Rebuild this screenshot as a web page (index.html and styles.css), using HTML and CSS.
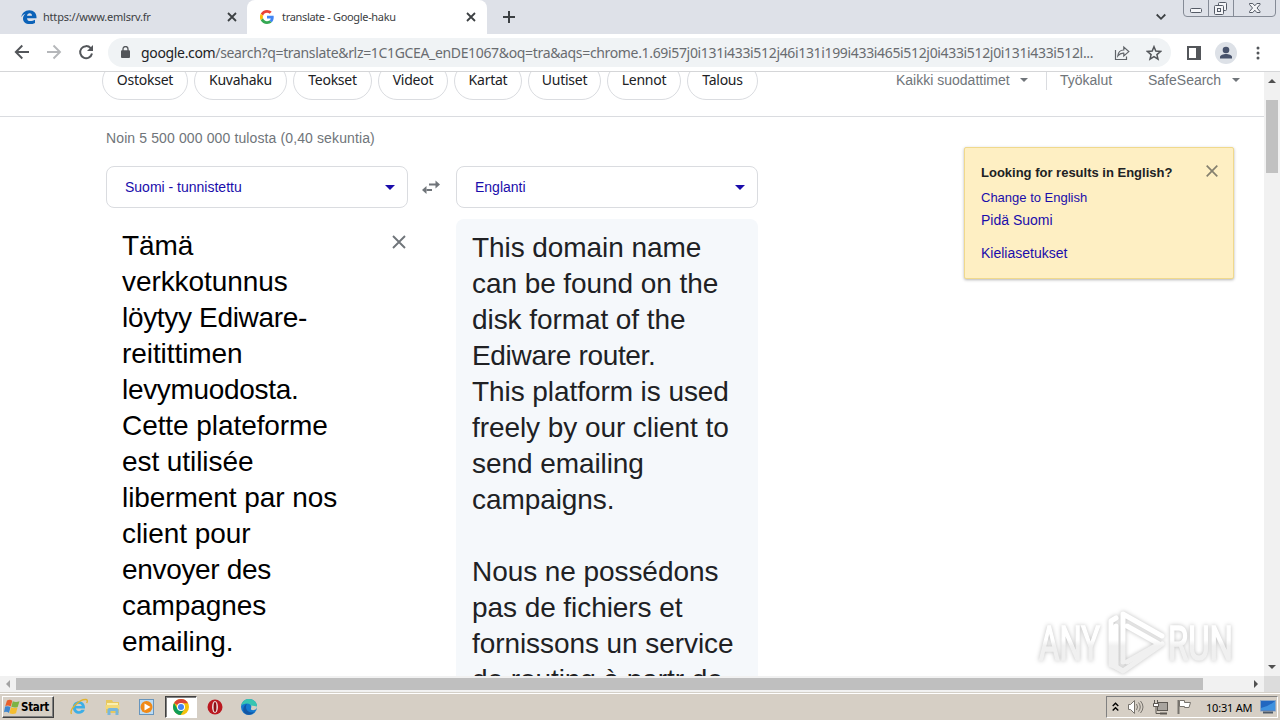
FILE: index.html
```html
<!DOCTYPE html>
<html lang="fi">
<head>
  <meta charset="UTF-8" />
  <title>translate - Google-haku</title>
  <link rel="stylesheet" href="styles.css">
</head>
<body>
  <div class="tab-strip">
    <div class="tab">
      <svg class="favicon" width="16" height="16" viewBox="0 0 16 16"><path d="M15.5 9.300H6c.2 2 1.400 2.800 3.200 2.800 1.800 0 3.400-.5 4.800-1.300v3.100c-1.500.8-3.300 1.200-5.500 1.200C4.500 15.100 2 12.800 2 9.500c0-1.800.8-3.500 2.500-4.700C2.700 5.300 1.200 6.700.3 8.300.8 4.200 4 1.200 8.300 1.200c4.500 0 7.200 3 7.200 7zM6 6.700h5c0-1.500-.8-2.500-2.300-2.500S6.200 5.200 6 6.700z" fill="#0b62b8"/></svg>
      <span class="tab-title first-title">https://www.emlsrv.fr</span>
      <svg class="tab-close" width="10" height="10" viewBox="0 0 10 10"><path d="M1 1l8 8M9 1l-8 8" stroke="#3c4043" stroke-width="1.8"/></svg>
    </div>
    <div class="tab active">
      <svg class="favicon" width="14" height="14" viewBox="0 0 48 48"><path fill="#ea4335" d="M24 9.500c3.500 0 6.700 1.200 9.200 3.600l6.900-6.900C35.900 2.400 30.500 0 24 0 14.600 0 6.500 5.400 2.600 13.200l8 6.200C12.400 13.700 17.700 9.500 24 9.500z"/><path fill="#4285f4" d="M47 24.500c0-1.600-.2-3.100-.4-4.500H24v9h12.900c-.6 3-2.300 5.500-4.800 7.200l7.700 6C44.400 38 47 31.800 47 24.500z"/><path fill="#fbbc05" d="M10.500 28.600a14.500 14.500 0 0 1 0-9.200l-8-6.200a24 24 0 0 0 0 21.600z"/><path fill="#34a853" d="M24 48c6.500 0 11.900-2.100 15.900-5.800l-7.700-6c-2.200 1.500-4.900 2.300-8.200 2.300-6.300 0-11.600-4.200-13.500-9.900l-8 6.200C6.500 42.600 14.600 48 24 48z"/></svg>
      <span class="tab-title second-title">translate - Google-haku</span>
      <svg class="tab-close" width="10" height="10" viewBox="0 0 10 10"><path d="M1 1l8 8M9 1l-8 8" stroke="#3c4043" stroke-width="1.8"/></svg>
    </div>
    <svg class="new-tab" width="12" height="12" viewBox="0 0 12 12"><path d="M6 0v12M0 6h12" stroke="#3c4043" stroke-width="2"/></svg>
    <svg class="tab-search" width="10" height="8" viewBox="0 0 10 8"><path d="M.7 1.500L5 5.800l4.300-4.300" fill="none" stroke="#3c4043" stroke-width="1.8"/></svg>
    <svg class="window-buttons" width="94" height="18" viewBox="0 0 94 18">
      <path d="M.5 0v13q0 3.500 3.500 3.500h85q3.500 0 3.500-3.500V0M25.500 0v16M50.500 0v16" fill="none" stroke="#858b96"/>
      <g fill="#f4f5f8" stroke="#555b66">
        <rect x="7.500" y="8.500" width="11" height="4" rx="1"/>
        <rect x="35.500" y="2.500" width="8" height="8" rx="1"/>
        <rect x="31.500" y="5.500" width="9" height="9" rx="1"/>
        <rect x="34.500" y="8.500" width="3" height="3"/>
        <path d="M66.500 3.500h3.300l2 2.300 2-2.300h3.200v1L74 8l3 3.500v1h-3.200l-2-2.300-2 2.300h-3.300v-1L69.500 8l-3-3.500z"/>
      </g>
    </svg>
  </div>

  <div class="toolbar">
    <svg class="nav-icons" width="82" height="16" viewBox="0 0 82 16">
      <path d="M15 8H2M8.300 1.500L1.800 8l6.500 6.500" fill="none" stroke="#53565a" stroke-width="1.900"/>
      <path d="M33 8h12.500M39.500 1.500L46 8l-6.500 6.500" fill="none" stroke="#b5b7ba" stroke-width="1.900"/>
      <path d="M76.700 4.200A6 6 0 1 0 78 9.500" fill="none" stroke="#53565a" stroke-width="2"/><path d="M79 1v6h-6z" fill="#53565a"/>
    </svg>
    <div class="omnibox">
      <svg class="lock" width="9" height="12" viewBox="0 0 9 12"><path d="M2 5V3a2.500 2.500 0 0 1 5 0v2" fill="none" stroke="#53565a" stroke-width="1.300"/><rect y="4.300" width="9" height="7.700" rx="1" fill="#53565a"/></svg>
      <div class="url"><span class="host">google.com</span>/search?q=translate&amp;rlz=1C1GCEA_enDE1067&amp;oq=tra&amp;aqs=chrome.1.69i57j0i131i433i512j46i131i199i433i465i512j0i433i512j0i131i433i512l...</div>
      <svg class="share" width="16" height="16" viewBox="0 0 16 16"><path d="M1.500 5v9.500h11v-3M3.800 11c.4-4 2.700-6 6-6V2l5 4.600-5 4.400V8.200C7.500 8 5.500 8.800 3.800 11z" fill="none" stroke="#5f6368" stroke-width="1.200"/></svg>
      <svg class="star" width="16" height="16" viewBox="0 0 16 16"><path d="M8 1.700l1.800 4.400 4.700.4-3.600 3.100 1.100 4.600L8 11.700l-4 2.500 1.100-4.600-3.600-3.100 4.700-.4z" fill="none" stroke="#53565a" stroke-width="1.500"/></svg>
    </div>
    <svg class="side-panel" width="14" height="14" viewBox="0 0 14 14"><rect x="1" y="1" width="12" height="12" fill="none" stroke="#53565a" stroke-width="2"/><path d="M9 0h5v14H9z" fill="#53565a"/></svg>
    <svg class="profile" width="22" height="22" viewBox="0 0 22 22"><circle cx="11" cy="11" r="11" fill="#dde1e7"/><circle cx="11" cy="8" r="3.300" fill="#47526b"/><path d="M5 16.500v-1.500c0-2 3.500-3 6-3s6 1 6 3v1.500z" fill="#47526b"/></svg>
    <svg class="menu-dots" width="4" height="14" viewBox="0 0 4 14" fill="#53565a"><circle cx="2" cy="2" r="1.500"/><circle cx="2" cy="7" r="1.500"/><circle cx="2" cy="12" r="1.500"/></svg>
  </div>

  <div class="window">
    <div class="page">
      <div class="filters">
        <div class="chip w86">Ostokset</div>
        <div class="chip w93">Kuvahaku</div>
        <div class="chip w79">Teokset</div>
        <div class="chip w70">Videot</div>
        <div class="chip w68">Kartat</div>
        <div class="chip w73">Uutiset</div>
        <div class="chip w74">Lennot</div>
        <div class="chip w71">Talous</div>
        <div class="tools">
          <span class="all-filters">Kaikki suodattimet</span><i class="caret"></i>
          <i class="divider"></i>
          <span class="tool-link">Työkalut</span>
          <span class="safe">SafeSearch</span><i class="caret"></i>
        </div>
      </div>

      <div class="results">
        <div class="stats">Noin 5 500 000 000 tulosta (0,40 sekuntia)</div>
        <div class="languages">
          <div class="select"><span>Suomi - tunnistettu</span><i class="caret blue"></i></div>
          <svg class="swap" width="18" height="14" viewBox="0 0 18 14"><path d="M4.500 10H10M7 4.500h7" stroke="#70757a" stroke-width="2"/><path d="M0 10l4.500-4v8zM18 4.500L13.500.5v8z" fill="#70757a"/></svg>
          <div class="select"><span>Englanti</span><i class="caret blue"></i></div>
        </div>
        <div class="panels">
          <div class="source">
            <div>Tämä<br>verkkotunnus<br><span class="tight">löytyy Ediware-</span><br>reitittimen<br><span class="tight">levymuodosta.</span><br>Cette plateforme<br>est utilisée<br>liberment par nos<br>client pour<br><span class="tight">envoyer des</span><br>campagnes<br>emailing.</div>
            <svg class="clear" width="14" height="14" viewBox="0 0 14 14"><path d="M1 1l12 12M13 1L1 13" stroke="#70757a" stroke-width="1.900"/></svg>
          </div>
          <div class="target">This domain name<br>can be found on the<br>disk format of the<br><span class="tight">Ediware router.</span><br>This platform is used<br>freely by our client to<br>send emailing<br>campaigns.<br><br>Nous ne possédons<br>pas de fichiers et<br>fornissons un service<br>de routing à partr de</div>
        </div>
      </div>

      <div class="notice">
        <div class="notice-head">
          <b>Looking for results in English?</b>
          <svg width="12" height="12" viewBox="0 0 12 12"><path d="M.7.7l10.600 10.600M11.300.7L.7 11.300" stroke="#85806f" stroke-width="1.700"/></svg>
        </div>
        <a class="change">Change to English</a>
        <a class="keep">Pidä Suomi</a>
        <a class="settings">Kieliasetukset</a>
      </div>

      <svg class="watermark" width="204" height="72" viewBox="0 0 204 72">
        <defs>
          <linearGradient id="fade" gradientUnits="userSpaceOnUse" x1="0" y1="0" x2="0" y2="72">
            <stop offset="0.5" stop-color="#fff"/>
            <stop offset="0.58" stop-color="#f0f0f0"/>
          </linearGradient>
        </defs>
        <g class="mark-text">
          <text x="3" y="56" textLength="61" lengthAdjust="spacingAndGlyphs">ANY</text>
          <text x="132" y="56" textLength="65" lengthAdjust="spacingAndGlyphs">RUN</text>
        </g>
        <g class="mark-logo">
          <path d="M87 58V10l39 22"/>
          <path d="M91 22l32 18-32 18"/>
          <path d="M80 14l-5 3v44l5 2V22"/>
          <path d="M80 63l7 4 39-27"/>
        </g>
      </svg>
    </div>
    <div class="scroll-y">
      <i class="arrow up"></i>
      <i class="thumb"></i>
      <i class="arrow down"></i>
    </div>
  </div>
  <div class="scroll-x">
    <i class="arrow left"></i>
    <i class="thumb"></i>
    <i class="arrow right"></i>
    <i class="corner"></i>
  </div>

  <div class="taskbar">
    <div class="start">
      <svg width="16" height="16" viewBox="0 0 16 16"><path d="M3 1.500q3-1.500 5.300.2L6.800 7.600Q4.500 6 1.300 7z" fill="#e8602c"/><path d="M8.800 2.200q3 1.500 6.700 0L13.700 8q-3 1.300-6.400-.2z" fill="#7db343"/><path d="M1.100 7.600q3-1 5.400.3L5 14Q2.500 12 0 13.200z" fill="#3f87cf"/><path d="M7 8.300q3 1.500 6.500.2L12 14.300q-3 1.300-6.600 0z" fill="#f4bd2f"/></svg>
      <b>Start</b>
    </div>
    <div class="launchers">
      <svg width="18" height="18" viewBox="0 0 18 18"><path d="M15 10.500H6c.3 3 4.300 3.500 5.400 1.300h3.400c-1.800 6-12 5.200-12-2.300C2.800 1.300 15.500 1 15 10.500z" fill="#3caee6"/><path d="M6 8h5.800c-.6-3-5.200-3-5.800 0z" fill="#d6cfc5"/><path d="M1.500 16C-1 12 9 1 16 1.500c1.800.2 1.500 2 .6 3.500" fill="none" stroke="#e2b32c" stroke-width="1.300"/></svg>
      <svg width="18" height="18" viewBox="0 0 18 18"><path d="M2 2h6l1 2h6v11H2z" fill="#e8c85e"/><path d="M3 5h11v5H3z" fill="#faf0b0"/><path d="M1.500 7h14v4h-14z" fill="#f3d978"/><path d="M3.500 17v-5q0-2 2-2h7q2 0 2 2v5h-3v-4h-5v4z" fill="#78b7dc"/></svg>
      <svg width="18" height="18" viewBox="0 0 18 18"><rect x="1.500" y="1.500" width="14" height="15" fill="#bcdcf5" stroke="#6795bd"/><circle cx="8.500" cy="9" r="6" fill="#f08a18"/><path d="M6.500 5.500v7l6-3.500z" fill="#fff"/></svg>
      <div class="running">
        <svg width="16" height="16" viewBox="0 0 16 16"><circle cx="8" cy="8" r="8" fill="#f4c20d"/><path d="M8 8L1.100 4A8 8 0 0 1 15 4.300H8z" fill="#db4437"/><path d="M1.100 4A8 8 0 0 0 7.500 16L11.500 10 8 8 4.500 10z" fill="#0f9d58"/><circle cx="8" cy="8" r="4" fill="#fff"/><circle cx="8" cy="8" r="3" fill="#4285f4"/></svg>
      </div>
      <svg width="18" height="18" viewBox="0 0 18 18"><circle cx="9" cy="9" r="7.500" fill="#bb1820"/><ellipse cx="9" cy="9" rx="3" ry="6" fill="#ead9d7"/><ellipse cx="9" cy="9" rx="1.400" ry="5" fill="#8e1016"/></svg>
      <svg width="18" height="18" viewBox="0 0 18 18"><circle cx="9" cy="9" r="8" fill="#1479cf"/><path d="M1.200 8C2 3.500 5 1 9 1c5 0 8 3.500 8 7 0 3.500-3.500 4.500-6 3 1.500-3-1-5.500-4-5.500-2.500 0-5 1-5.800 2.500z" fill="#37c5b1"/><path d="M7 6c-3 4 1 10 7 8-2 3-6 3.500-9 1.500C2 13.500 3 7 7 6z" fill="#1256a4"/><path d="M11 7.500c1.200 1.500-.5 2.500 0 4 2 1.500 6 .5 6-3z" fill="#d6cfc5"/></svg>
    </div>
    <div class="tray">
      <svg class="chevrons" width="7" height="10" viewBox="0 0 7 10"><path d="M.7 4l2.800-2.800L6.300 4M.7 8.500l2.800-2.800 2.800 2.800" fill="none" stroke="#000" stroke-width="1.400"/></svg>
      <svg width="17" height="16" viewBox="0 0 17 16" fill="none" stroke="#77736d"><path d="M1.500 5.500h2l4-4v13l-4-4h-2z" fill="#fff"/><path d="M9.500 5q2 3 0 6M11.500 3.500q3.500 4.500 0 9M13.500 2q5 6 0 12"/></svg>
      <svg width="17" height="16" viewBox="0 0 17 16"><rect x="5.500" y="3.500" width="10" height="8" fill="#a8a49e" stroke="#5c5852"/><path d="M2.500 1v3M5.500 1v3M1.500 4.500h5v3h-5zM4 8v6.500h11" fill="none" stroke="#5c5852"/><rect x="2" y="5" width="4" height="2" fill="#fff"/><path d="M8 14.500h7" stroke="#5c5852" stroke-width="2"/></svg>
      <svg class="flag" width="17" height="16" viewBox="0 0 17 16"><path d="M2.500 1v14" stroke="#77736d" stroke-width="2"/><path d="M3.500 1.500h5v2h6l-1.500 5H8.500v-1h-5z" fill="#fff" stroke="#77736d"/></svg>
      <span class="clock">10:31 AM</span>
      <svg class="desktop" width="16" height="14" viewBox="0 0 16 14"><rect x=".5" y=".5" width="15" height="10.500" fill="#2167c0" stroke="#8da7c5"/><path d="M1 8Q8 7 15 1v9H1z" fill="#3f92df"/><path d="M3 12.500h10" stroke="#4e5a68" stroke-width="2"/></svg>
    </div>
  </div>
</body>
</html>
```

FILE: styles.css
```css
* {
  box-sizing: border-box;
}

body {
  display: flex;
  flex-direction: column;
  width: 1280px;
  height: 720px;
  margin: 0;
  overflow: hidden;
  background: #fff;
  font-family: "Liberation Sans", Arial, sans-serif;
  font-size: 14px;
}

svg {
  display: block;
  flex: none;
}

i {
  display: block;
  flex: none;
}

/* browser tabs */
.tab-strip {
  display: flex;
  align-items: center;
  flex: none;
  height: 34px;
  background: #dee1e8;
}

.tab {
  display: flex;
  align-items: center;
  width: 247px;
  height: 34px;
  padding: 0 10px 0 21px;
}

.tab.active {
  width: 240px;
  padding: 0 11px 0 13px;
  background: #fff;
  border-radius: 8px 8px 0 0;
}

.tab-title {
  flex: 1;
  margin: -2px 0 0 8px;
  font-family: "Noto Sans", sans-serif;
  font-size: 11px;
  color: #3c4043;
  white-space: nowrap;
}

.first-title {
  margin-left: 6px;
  letter-spacing: -0.2px;
}

.second-title {
  letter-spacing: -0.33px;
}

.new-tab {
  margin-left: 16px;
}

.tab-search {
  margin-left: 641px;
}

.window-buttons {
  align-self: flex-start;
  margin-left: 17px;
}

/* toolbar */
.toolbar {
  display: flex;
  align-items: center;
  flex: none;
  height: 38px;
  padding-left: 14px;
  border-bottom: 1px solid #d5d6d8;
}

.nav-icons {
  margin-top: -2px;
}

.omnibox {
  display: flex;
  align-items: center;
  width: 1063px;
  height: 29px;
  margin-left: 12px;
  padding-left: 13px;
  border-radius: 15px;
  background: #f0f3f5;
}

.lock {
  margin-top: -2px;
}

.url {
  width: 960px;
  margin-left: 11px;
  font-family: "Noto Sans", sans-serif;
  color: #696c70;
  letter-spacing: -0.34px;
  white-space: nowrap;
}

.host {
  color: #202124;
}

.share {
  margin-left: 13px;
}

.star {
  margin-left: 16px;
}

.side-panel {
  margin-left: 16px;
}

.profile {
  margin-left: 14px;
}

.menu-dots {
  margin-left: 19px;
}

/* visible part of the page */
.window {
  display: flex;
  flex: none;
  height: 604px;
}

.page {
  position: relative;
  width: 1264px;
  overflow: hidden;
}

.filters {
  display: flex;
  gap: 6px;
  height: 55px;
  margin-top: -10px;
  padding-left: 102px;
  border-bottom: 1px solid #dadce0;
}

.chip {
  flex: none;
  height: 38px;
  border: 1px solid #dadce0;
  border-radius: 19px;
  font-family: "Noto Sans", sans-serif;
  color: #202124;
  letter-spacing: -0.25px;
  line-height: 33px;
  text-align: center;
}

.w86 { width: 86px; }
.w93 { width: 93px; }
.w79 { width: 79px; }
.w70 { width: 70px; }
.w68 { width: 68px; }
.w73 { width: 73px; }
.w74 { width: 74px; }
.w71 { width: 71px; }

.tools {
  display: flex;
  align-items: center;
  height: 36px;
  margin-left: 132px;
  color: #70757a;
}

.all-filters {
  width: 124px;
}

.caret {
  width: 0;
  height: 0;
  border: 4px solid transparent;
  border-top: 4px solid #70757a;
  border-bottom: 0;
}

.caret.blue {
  border-width: 5px 5px 0;
  border-top-color: #1a0dab;
}

.divider {
  width: 1px;
  height: 20px;
  margin: 0 13px 0 18px;
  background: #dadce0;
}

.tool-link {
  width: 88px;
}

.safe {
  width: 84px;
}

.results {
  padding-left: 106px;
}

.stats {
  height: 49px;
  padding-top: 13px;
  color: #70757a;
  line-height: 17px;
  letter-spacing: 0.12px;
}

.languages {
  display: flex;
  align-items: center;
}

.select {
  display: flex;
  align-items: center;
  justify-content: space-between;
  width: 302px;
  height: 42px;
  padding: 0 12px 0 18px;
  border: 1px solid #dadce0;
  border-radius: 8px;
  color: #1a0dab;
}

.swap {
  margin: 0 16px 0 14px;
}

.panels {
  display: flex;
  gap: 48px;
  margin-top: 11px;
  font-size: 28px;
  line-height: 36px;
  letter-spacing: -0.07px;
  white-space: nowrap;
}

.tight {
  letter-spacing: -0.32px;
}

.source {
  display: flex;
  justify-content: space-between;
  width: 302px;
  padding: 9px 2px 0 16px;
  color: #000;
}

.clear {
  margin-top: 7px;
}

.target {
  width: 302px;
  padding: 11px 0 0 16px;
  border-radius: 8px;
  background: #f5f8fb;
  color: #202124;
}

/* lies over the results, on the right */
.notice {
  position: absolute;
  top: 75px;
  left: 964px;
  display: flex;
  flex-direction: column;
  width: 270px;
  height: 132px;
  padding: 16px;
  border: 1px solid #f0d98c;
  border-radius: 2px;
  background: #feefc3;
  box-shadow: 0 1px 3px rgba(0, 0, 0, 0.3);
  color: #202124;
  line-height: 17px;
}

.notice-head {
  display: flex;
  align-items: center;
  justify-content: space-between;
  margin-right: -1px;
  font-size: 13px;
}

.notice-head svg {
  margin-top: -3px;
}

.notice a {
  color: #1a0dab;
}

.notice .change {
  margin-top: 8px;
  font-size: 13px;
}

.keep {
  margin-top: 6px;
}

.settings {
  margin-top: 16px;
}

.watermark {
  position: absolute;
  top: 532px;
  left: 1036px;
  filter: drop-shadow(0 0 2px rgba(0, 0, 0, 0.25));
}

.mark-text {
  fill: url(#fade);
  stroke: url(#fade);
  stroke-width: 1.5;
  font-family: Roboto, sans-serif;
  font-size: 48px;
}

.mark-logo {
  fill: none;
  stroke: url(#fade);
  stroke-width: 5;
  stroke-linejoin: round;
  stroke-linecap: round;
}

/* scrollbars */
.scroll-y {
  display: flex;
  flex-direction: column;
  align-items: center;
  width: 16px;
  background: #f1f1f1;
}

.scroll-y .thumb {
  width: 12px;
  height: 73px;
  margin-top: 17px;
  background: #c1c1c1;
}

.arrow {
  width: 0;
  height: 0;
  border: 4px solid transparent;
}

.up {
  margin-top: 7px;
  border-top: 0;
  border-bottom-color: #505050;
}

.down {
  margin: auto 0 7px;
  border-bottom: 0;
  border-top-color: #505050;
}

.scroll-x {
  display: flex;
  align-items: center;
  flex: none;
  height: 16px;
  background: #f1f1f1;
}

.scroll-x .thumb {
  width: 1187px;
  height: 12px;
  margin-left: 6px;
  background: #bfbfbf;
}

.left {
  margin-left: 6px;
  border-left: 0;
  border-right-color: #a3a3a3;
}

.right {
  margin-left: 51px;
  border-right: 0;
  border-left-color: #505050;
}

.corner {
  width: 16px;
  height: 16px;
  margin-left: auto;
  background: #dcdcdc;
}

/* windows taskbar */
.taskbar {
  display: flex;
  align-items: center;
  flex: none;
  height: 28px;
  padding: 1px 2px 0;
  border-top: 1px solid #d4d0c8;
  background: #d6cfc5;
  box-shadow: inset 0 1px 0 #fff;
}

.start {
  display: flex;
  align-items: center;
  gap: 1px;
  width: 52px;
  height: 22px;
  padding-left: 1px;
  border: 1px solid;
  border-color: #fff #404040 #404040 #fff;
  box-shadow: inset -1px -1px 0 #808080;
  font-family: "DejaVu Sans Condensed", "DejaVu Sans", sans-serif;
  font-size: 11.5px;
  letter-spacing: -0.3px;
}

.launchers {
  display: flex;
  align-items: center;
  gap: 16px;
  margin-left: 16px;
}

.running {
  display: flex;
  align-items: center;
  justify-content: center;
  width: 32px;
  height: 22px;
  margin: 0 -7px;
  border: 1px solid;
  border-color: #404040 #fff #fff #404040;
  background: #fff;
  box-shadow: inset 1px 1px 0 #808080;
}

.tray {
  display: flex;
  align-items: center;
  width: 172px;
  height: 22px;
  margin-left: auto;
  padding-left: 5px;
  border: 1px solid;
  border-color: #808080 #fff #fff #808080;
  gap: 8px;
  font-family: "Noto Sans", sans-serif;
  font-size: 11px;
}

.flag {
  margin-left: -1px;
}

.clock {
  width: 46px;
  margin-left: 5px;
  letter-spacing: -0.2px;
  white-space: nowrap;
}
```
